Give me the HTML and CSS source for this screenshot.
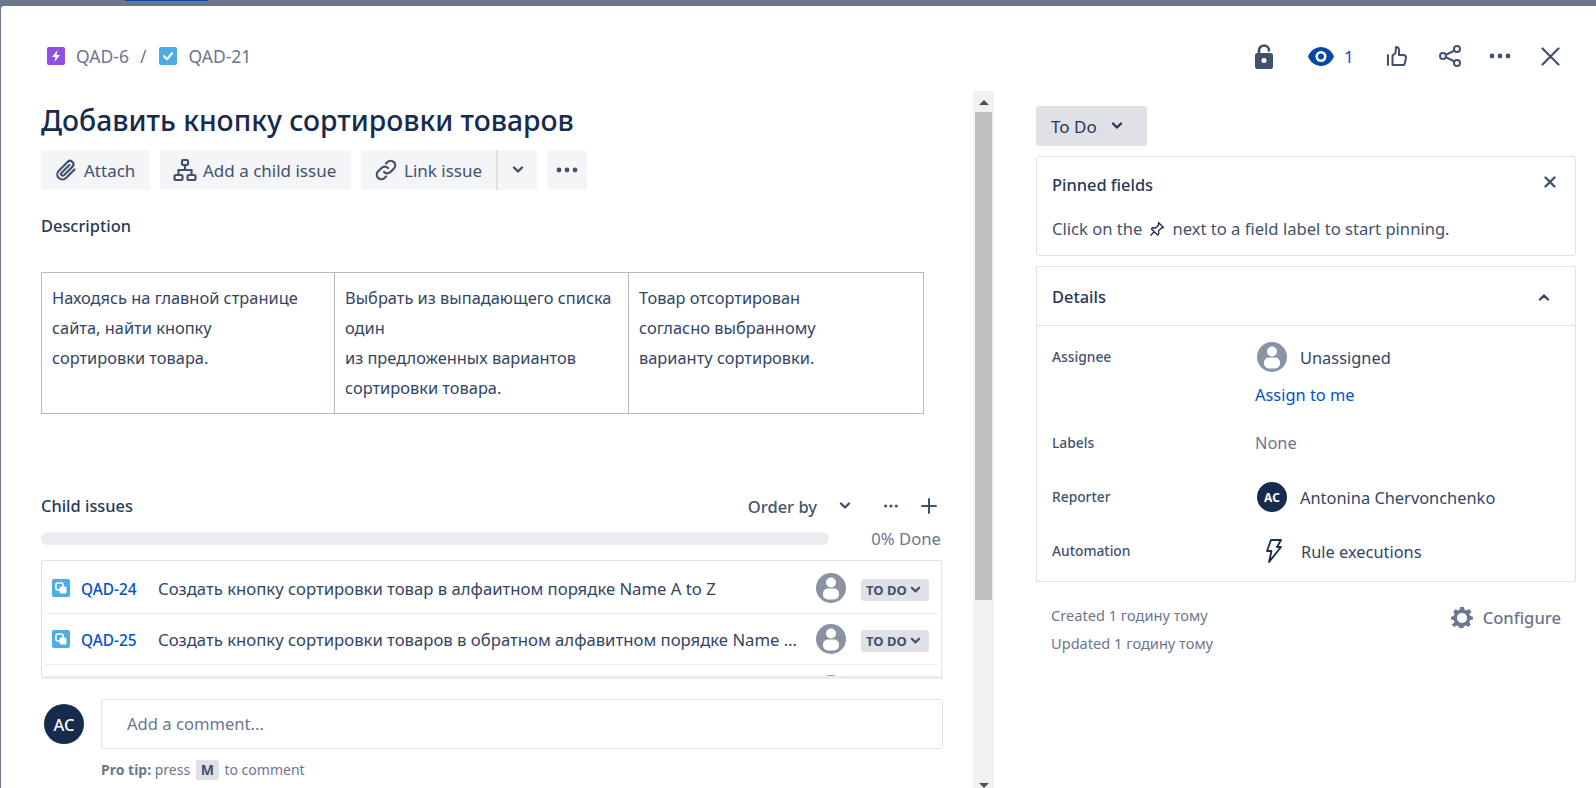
FILE: index.html
```html
<!DOCTYPE html>
<html lang="ru">
<head>
  <meta charset="UTF-8">
  <title>QAD-21</title>
  <link rel="stylesheet" href="styles.css">
</head>
<body>
  <svg class="sprite" aria-hidden="true">
    <symbol id="avatar-empty" viewBox="0 0 30 30">
      <circle cx="15" cy="15" r="15" fill="#8993a4"/>
      <circle cx="15" cy="9.5" r="5" fill="#fff"/>
      <rect x="7" y="15.5" width="16" height="11" rx="5" fill="#fff"/>
    </symbol>
    <symbol id="subtask" viewBox="0 0 18 18">
      <rect width="18" height="18" rx="2" fill="#4bade8"/>
      <rect x="4" y="4" width="7" height="7" rx="1.5" fill="none" stroke="#fff" stroke-width="1.6"/>
      <rect x="7.5" y="7.5" width="7" height="7" rx="1.5" fill="#fff"/>
    </symbol>
    <symbol id="chevron" viewBox="0 0 12 8">
      <path d="M2 1.500l4 4 4-4" fill="none" stroke="currentColor" stroke-width="2.400" stroke-linecap="round" stroke-linejoin="round"/>
    </symbol>
    <symbol id="dots" viewBox="0 0 22 6">
      <circle cx="3" cy="3" r="2.400" fill="currentColor"/>
      <circle cx="11" cy="3" r="2.400" fill="currentColor"/>
      <circle cx="19" cy="3" r="2.400" fill="currentColor"/>
    </symbol>
  </svg>

  <div class="backdrop-tab"></div>
  <div class="modal">
    <header class="top-bar">
      <nav class="breadcrumb">
        <svg class="crumb-icon" viewBox="0 0 18 18"><rect width="18" height="18" rx="2" fill="#904ee2"/><path d="M10.500 3L5 10h3.500l-1 5L13 8H9.500z" fill="#fff"/></svg>
        <span class="crumb-text">QAD-6</span>
        <span class="crumb-sep">/</span>
        <svg class="crumb-icon" viewBox="0 0 18 18"><rect width="18" height="18" rx="2" fill="#4bade8"/><path d="M5 9.200l3 3 5-6" fill="none" stroke="#fff" stroke-width="2.200" stroke-linecap="round" stroke-linejoin="round"/></svg>
        <span class="crumb-text">QAD-21</span>
      </nav>
      <div class="top-actions">
        <svg class="ic-lock" viewBox="0 0 18 25"><path d="M4 11V6.500a5 5 0 0 1 10 0" fill="none" stroke="#42526e" stroke-width="2.600" stroke-linecap="round"/><rect y="9" width="18" height="16" rx="2.500" fill="#42526e"/><circle cx="9" cy="16.500" r="2.500" fill="#fff"/></svg>
        <svg class="ic-eye" viewBox="0 0 26 19"><path d="M0 9.500C2.500 3.500 7.500 0 13 0s10.500 3.500 13 9.500C23.500 15.500 18.500 19 13 19S2.500 15.500 0 9.500z" fill="#0747a6"/><circle cx="13" cy="9.500" r="5.500" fill="#fff"/><circle cx="13" cy="9.500" r="3" fill="#0747a6"/></svg>
        <span class="watch-count">1</span>
        <svg class="ic-thumb" viewBox="0 0 20 20"><path d="M1 9v10M5.500 9.500v9.500h10a2.500 2.500 0 0 0 2.500-2.200l1-5.300a2.500 2.500 0 0 0-2.500-2.500H12V4a3 3 0 0 0-3-3L8.500 7z" fill="none" stroke="#42526e" stroke-width="2" stroke-linejoin="round" stroke-linecap="round"/></svg>
        <svg class="ic-share" viewBox="0 0 22 22"><path d="M17.500 4.500L4.500 11l13 6.500" fill="none" stroke="#42526e" stroke-width="2"/><circle cx="18" cy="4" r="3" fill="#fff" stroke="#42526e" stroke-width="2"/><circle cx="4" cy="11" r="3" fill="#fff" stroke="#42526e" stroke-width="2"/><circle cx="18" cy="18" r="3" fill="#fff" stroke="#42526e" stroke-width="2"/></svg>
        <svg class="ic-dots-top"><use href="#dots"/></svg>
        <svg class="ic-close" viewBox="0 0 19 19"><path d="M1.500 1.500l16 16M17.500 1.500l-16 16" fill="none" stroke="#42526e" stroke-width="2.200" stroke-linecap="round"/></svg>
      </div>
    </header>

    <div class="columns">
      <div class="left-col">
        <main class="issue">
          <div class="issue-scroll">
            <h1 class="issue-title">Добавить кнопку сортировки товаров</h1>
            <div class="toolbar">
              <button class="btn btn-attach">
                <svg class="btn-icon" viewBox="0 0 24 24"><path d="M20.500 11.500l-8.500 8.500a5 5 0 0 1-7.200-7.200l9-9a3.400 3.400 0 0 1 4.800 4.800l-8.600 8.600a1.600 1.600 0 0 1-2.400-2.400l7.800-7.800" fill="none" stroke="#42526e" stroke-width="2.200" stroke-linecap="round" stroke-linejoin="round"/></svg>
                Attach
              </button>
              <button class="btn btn-child">
                <svg class="btn-icon" viewBox="0 0 24 24"><g fill="none" stroke="#42526e" stroke-width="2.200"><rect x="9" y="2" width="6" height="5" rx="1"/><rect x="1.500" y="17" width="8" height="5" rx="1.500"/><rect x="14.500" y="17" width="8" height="5" rx="1.500"/><path d="M12 7v5M5.500 17v-5h13v5"/></g></svg>
                Add a child issue
              </button>
              <div class="btn-group">
                <button class="btn btn-link">
                  <svg class="btn-icon" viewBox="0 0 24 24"><path d="M10 14a4.500 4.500 0 0 0 6.500 0l3.500-3.500a4.600 4.600 0 0 0-6.500-6.500L12 5.500M14 10a4.500 4.500 0 0 0-6.500 0L4 13.500a4.600 4.600 0 0 0 6.500 6.500l1.500-1.500" fill="none" stroke="#42526e" stroke-width="2.200" stroke-linecap="round"/></svg>
                  Link issue
                </button>
                <button class="btn btn-split"><svg class="chev"><use href="#chevron"/></svg></button>
              </div>
              <button class="btn btn-more"><svg class="ic-dots-btn"><use href="#dots"/></svg></button>
            </div>

            <h2 class="section-title desc-title">Description</h2>
            <table class="desc-table">
              <tr>
                <td class="col-a">Находясь на главной странице сайта, найти кнопку<br>сортировки товара.</td>
                <td class="col-b">Выбрать из выпадающего списка один<br>из предложенных вариантов сортировки товара.</td>
                <td class="col-c">Товар отсортирован<br>согласно выбранному<br>варианту сортировки.</td>
              </tr>
            </table>

            <div class="child-head">
              <h2 class="section-title">Child issues</h2>
              <div class="child-actions">
                <span class="order-by">Order by</span>
                <svg class="chev order-chev"><use href="#chevron"/></svg>
                <svg class="ic-dots-small"><use href="#dots"/></svg>
                <svg class="ic-plus" viewBox="0 0 16 16"><path d="M8 1v14M1 8h14" fill="none" stroke="#42526e" stroke-width="2" stroke-linecap="round"/></svg>
              </div>
            </div>
            <div class="progress-row">
              <div class="progress-bar"></div>
              <span class="progress-label">0% Done</span>
            </div>
            <ul class="child-list">
              <li class="child-row">
                <svg class="row-icon"><use href="#subtask"/></svg>
                <a class="row-key">QAD-24</a>
                <span class="row-summary">Создать кнопку сортировки товар в алфаитном порядке Name A to Z</span>
                <svg class="row-avatar"><use href="#avatar-empty"/></svg>
                <span class="lozenge">TO DO<svg class="chev loz-chev"><use href="#chevron"/></svg></span>
              </li>
              <li class="child-row">
                <svg class="row-icon"><use href="#subtask"/></svg>
                <a class="row-key">QAD-25</a>
                <span class="row-summary">Создать кнопку сортировки товаров в обратном алфавитном порядке Name Z to A</span>
                <svg class="row-avatar"><use href="#avatar-empty"/></svg>
                <span class="lozenge">TO DO<svg class="chev loz-chev"><use href="#chevron"/></svg></span>
              </li>
              <li class="child-row child-row-cut">
                <svg class="row-avatar"><use href="#avatar-empty"/></svg>
              </li>
            </ul>
          </div>

          <div class="comment-bar">
            <div class="avatar avatar-big">AC</div>
            <div class="comment-main">
              <div class="comment-input">Add a comment...</div>
              <p class="pro-tip"><b>Pro tip:</b> press <kbd class="key">M</kbd> to comment</p>
            </div>
          </div>
        </main>
        <div class="scrollbar">
          <span class="arrow-up"></span>
          <div class="thumb"></div>
          <span class="arrow-down"></span>
        </div>
      </div>

      <aside class="right-col">
        <button class="status-btn">To Do <svg class="chev status-chev"><use href="#chevron"/></svg></button>

        <section class="panel pinned">
          <div class="pinned-head">
            <h3 class="panel-title">Pinned fields</h3>
            <svg class="ic-close-small" viewBox="0 0 12 12"><path d="M1.500 1.500l9 9M10.500 1.500l-9 9" fill="none" stroke="#42526e" stroke-width="2.400" stroke-linecap="round"/></svg>
          </div>
          <p class="pinned-hint">Click on the
            <svg class="ic-pin" viewBox="0 0 16 16"><path d="M9.500 1.500l5 5-2 .5-3 3 .3 3-1.300 1-6-6 1-1.300 3 .3 3-3zM5 11l-3.500 3.500" fill="none" stroke="#172b4d" stroke-width="1.300" stroke-linejoin="round"/></svg>
            next to a field label to start pinning.</p>
        </section>

        <section class="panel details-head">
          <h3 class="panel-title">Details</h3>
          <svg class="chev details-chev"><use href="#chevron"/></svg>
        </section>
        <section class="details-body">
          <div class="field">
            <span class="field-label">Assignee</span>
            <div>
              <div class="field-person">
                <svg class="person-avatar"><use href="#avatar-empty"/></svg>
                <span>Unassigned</span>
              </div>
              <a class="assign-link">Assign to me</a>
            </div>
          </div>
          <div class="field">
            <span class="field-label">Labels</span>
            <span class="field-none">None</span>
          </div>
          <div class="field">
            <span class="field-label">Reporter</span>
            <div class="field-person">
              <div class="avatar avatar-small">AC</div>
              <span>Antonina Chervonchenko</span>
            </div>
          </div>
          <div class="field">
            <span class="field-label">Automation</span>
            <div class="field-person">
              <svg class="ic-bolt" viewBox="0 0 16 24"><path d="M5 1h10l-4 7h4L3 23l2.500-11H1z" fill="none" stroke="#172b4d" stroke-width="1.800" stroke-linejoin="round"/></svg>
              <span>Rule executions</span>
            </div>
          </div>
        </section>

        <footer class="meta">
          <div class="dates">
            <p>Created 1 годину тому</p>
            <p>Updated 1 годину тому</p>
          </div>
          <div class="configure">
            <svg class="ic-gear" viewBox="0 0 24 24"><path d="M10 1h4l.700 3 2.300 1 2.600-1.600 2.800 2.800L20 8.700l1 2.300 3 .700v3l-3 .700-1 2.300 1.600 2.500-2.800 2.800-2.600-1.600-2.300 1-.700 2.600h-4l-.700-2.600-2.300-1-2.600 1.600-2.800-2.800L4 17.700 3 15.400l-3-.700v-3l3-.700 1-2.300-1.600-2.500 2.800-2.800L7 5l2.300-1z" fill="#6b778c"/><circle cx="12" cy="13" r="5.500" fill="#fff"/></svg>
            <span>Configure</span>
          </div>
        </footer>
      </aside>
    </div>
  </div>
</body>
</html>
```

FILE: styles.css
```css
* {
  box-sizing: border-box;
}

body {
  margin: 0;
  height: 788px;
  overflow: hidden;
  background-color: #6b778c;
  font-family: "Noto Sans", "Open Sans", sans-serif;
  font-size: 16.4px;
  color: #344563;
}

.sprite {
  display: none;
}

h1, h2, h3, p, ul {
  margin: 0;
  padding: 0;
}

svg {
  display: block;
  flex-shrink: 0;
}

.backdrop-tab {
  width: 83px;
  height: 1px;
  margin-left: 125px;
  background-color: #0747a6;
}

.modal {
  margin: 5px 0 0 1px;
  height: 782px;
  background-color: #fff;
  border-radius: 3px 0 0 0;
  overflow: hidden;
}

/* barra de cima */
.top-bar {
  display: flex;
  justify-content: space-between;
  align-items: center;
  height: 86px;
  padding: 28px 36px 14px 46px;
}

.breadcrumb {
  display: flex;
  align-items: center;
  color: #6b778c;
  font-size: 17.5px;
}

.crumb-icon {
  width: 18px;
  height: 18px;
}

.crumb-text {
  margin-left: 11px;
}

.crumb-sep {
  margin: 0 13px 0 11px;
}

.top-actions {
  display: flex;
  align-items: center;
}

.ic-lock {
  width: 18px;
  height: 25px;
}

.ic-eye {
  width: 26px;
  height: 19px;
  margin-left: 35px;
}

.watch-count {
  margin-left: 10px;
  width: 10px;
  color: #0052cc;
  font-size: 17px;
}

.ic-thumb {
  width: 20px;
  height: 20px;
  margin-left: 33px;
}

.ic-share {
  width: 22px;
  height: 22px;
  margin-left: 32px;
}

.ic-dots-top {
  width: 22px;
  height: 6px;
  margin-left: 28px;
  color: #42526e;
}

.ic-close {
  width: 19px;
  height: 19px;
  margin-left: 30px;
}

.columns {
  display: flex;
  height: 696px;
}

/* coluna da esquerda */
.left-col {
  display: flex;
  width: 993px;
  flex-shrink: 0;
}

.issue {
  width: 972px;
  padding-left: 40px;
  padding-right: 30px;
}

.issue-scroll {
  height: 584px;
  overflow: hidden;
}

.issue-title {
  font-size: 28.3px;
  line-height: 36px;
  font-weight: 500;
  margin-top: 10px;
  color: #172b4d;
}

.toolbar {
  display: flex;
  gap: 10px;
  margin-top: 12px;
}

.btn {
  display: flex;
  align-items: center;
  height: 40px;
  border: 0;
  border-radius: 3px;
  background-color: #f4f5f7;
  color: #42526e;
  font: inherit;
  font-size: 17px;
  padding: 0;
}

.btn-icon {
  width: 24px;
  height: 24px;
  margin-right: 6px;
}

.btn-attach {
  width: 109px;
  padding-left: 13px;
}

.btn-child {
  width: 191px;
  padding-left: 13px;
}

.btn-group {
  display: flex;
}

.btn-link {
  width: 137px;
  padding-left: 13px;
  border-right: 2px solid #dfe1e6;
  border-radius: 3px 0 0 3px;
}

.btn-split {
  width: 39px;
  justify-content: center;
  border-radius: 0 3px 3px 0;
}

.btn-more {
  width: 40px;
  justify-content: center;
}

.chev {
  width: 12px;
  height: 8px;
}

.ic-dots-btn {
  width: 22px;
  height: 6px;
}

.section-title {
  font-size: 16.4px;
  line-height: 24px;
  font-weight: 500;
  color: #253858;
}

.desc-title {
  margin-top: 24px;
}

.desc-table {
  border-collapse: collapse;
  table-layout: fixed;
  width: 882px;
  margin-top: 34px;
}

.desc-table td {
  height: 141px;
  border: 1px solid #b3bac5;
  padding: 10px;
  vertical-align: top;
  line-height: 30px;
}

.desc-table .col-a {
  width: 293px;
}

.desc-table .col-b {
  width: 294px;
}

.desc-table .col-c {
  width: 295px;
}

.child-head {
  display: flex;
  justify-content: space-between;
  align-items: center;
  margin-top: 76px;
  height: 32px;
}

.child-actions {
  display: flex;
  align-items: center;
  color: #42526e;
}

.order-by {
  font-size: 16.5px;
  font-weight: 500;
}

.order-chev {
  margin-left: 22px;
}

.ic-dots-small {
  width: 16px;
  height: 4px;
  margin-left: 32px;
}

.ic-plus {
  width: 16px;
  height: 16px;
  margin-left: 22px;
  margin-right: 6px;
}

.progress-row {
  display: flex;
  align-items: center;
  justify-content: space-between;
  height: 24px;
  margin-top: 4px;
  padding-right: 2px;
}

.progress-bar {
  width: 788px;
  height: 13px;
  border-radius: 7px;
  background-color: #ebecf0;
}

.progress-label {
  color: #6b778c;
  font-size: 16.7px;
}

.child-list {
  list-style: none;
  width: 901px;
  margin-top: 10px;
  padding: 2px 3px 0 3px;
  border: 1px solid #dfe1e6;
  border-bottom: 0;
  border-radius: 3px 3px 0 0;
}

.child-row {
  display: flex;
  align-items: center;
  height: 51px;
  padding: 0 9px 0 7px;
  border-bottom: 1px solid #ebecf0;
}

.child-row-cut {
  justify-content: flex-end;
  padding-right: 92px;
}

.row-icon {
  width: 18px;
  height: 18px;
}

.row-key {
  width: 77px;
  margin-left: 11px;
  margin-top: 2px;
  color: #0052cc;
  font-size: 15.4px;
  font-weight: 500;
}

.row-summary {
  width: 645px;
  white-space: nowrap;
  overflow: hidden;
  text-overflow: ellipsis;
  font-size: 16.7px;
}

.row-avatar {
  width: 30px;
  height: 30px;
  margin-left: 13px;
}

.lozenge {
  display: flex;
  align-items: center;
  width: 68px;
  height: 22px;
  margin-left: 15px;
  margin-top: 3px;
  padding: 0 5px;
  gap: 3px;
  border-radius: 3px;
  background-color: #dfe1e6;
  color: #42526e;
  font-size: 13px;
  font-weight: 700;
}

.loz-chev {
  width: 11px;
  height: 8px;
}

/* caixa de comentario */
.comment-bar {
  display: flex;
  border-top: 3px solid #ebecf0;
  padding: 20px 0 0 3px;
  width: 902px;
}

.avatar {
  display: flex;
  align-items: center;
  justify-content: center;
  flex-shrink: 0;
  border-radius: 50%;
  background-color: #172b4d;
  color: #fff;
}

.avatar-big {
  width: 40px;
  height: 40px;
  margin-top: 5px;
  font-size: 16.5px;
  font-weight: 500;
}

.avatar-small {
  width: 30px;
  height: 30px;
  font-size: 12px;
  font-weight: 700;
}

.comment-main {
  margin-left: 17px;
  flex-grow: 1;
}

.comment-input {
  height: 50px;
  line-height: 48px;
  padding-left: 25px;
  border: 1px solid #dfe1e6;
  border-radius: 3px;
  color: #6b778c;
  font-size: 16.6px;
}

.pro-tip {
  margin-top: 10px;
  color: #6b778c;
  font-size: 14px;
  line-height: 22px;
}

.key {
  display: inline-block;
  width: 23px;
  height: 20px;
  line-height: 20px;
  text-align: center;
  border-radius: 3px;
  background-color: #dfe1e6;
  color: #42526e;
  font-family: inherit;
  font-weight: 700;
  margin: 0 2px;
}

/* barra de rolagem */
.scrollbar {
  position: relative;
  width: 21px;
  margin-top: -1px;
  background-color: #f1f1f1;
  padding: 21px 2px 0;
}

.thumb {
  height: 488px;
  background-color: #c1c1c1;
}

.arrow-up, .arrow-down {
  position: absolute;
  left: 5.5px;
  border-left: 5px solid transparent;
  border-right: 5px solid transparent;
}

.arrow-up {
  top: 9px;
  border-bottom: 5px solid #505050;
}

.arrow-down {
  bottom: 0;
  border-top: 5px solid #505050;
}

/* coluna da direita */
.right-col {
  width: 540px;
  margin-left: 42px;
  padding-top: 14px;
}

.status-btn {
  display: flex;
  align-items: center;
  width: 111px;
  height: 40px;
  padding-left: 15px;
  border: 0;
  border-radius: 3px;
  background-color: #dfe1e6;
  color: #253858;
  font: inherit;
  font-size: 17px;
}

.status-chev {
  margin-left: 14px;
}

.panel {
  border: 1px solid #dfe1e6;
  border-radius: 3px;
}

.panel-title {
  font-size: 16.4px;
  font-weight: 500;
  color: #253858;
}

.pinned {
  height: 100px;
  margin-top: 10px;
  padding: 15px 15px 0;
}

.pinned-head {
  display: flex;
  justify-content: space-between;
  align-items: center;
  height: 24px;
}

.ic-close-small {
  width: 12px;
  height: 12px;
  margin-right: 4px;
  margin-top: -4px;
}

.pinned-hint {
  display: flex;
  align-items: center;
  gap: 7px;
  margin-top: 21px;
  line-height: 24px;
  font-size: 16.6px;
  color: #42526e;
}

.ic-pin {
  width: 16px;
  height: 16px;
}

.details-head {
  display: flex;
  justify-content: space-between;
  align-items: center;
  height: 60px;
  margin-top: 10px;
  padding: 1px 25px 0 15px;
}

.details-chev {
  transform: rotate(180deg);
}

.details-body {
  display: flex;
  flex-direction: column;
  gap: 24px;
  height: 257px;
  margin-top: -1px;
  padding: 17px 15px 0;
  border: 1px solid #dfe1e6;
  border-top: 0;
  border-radius: 0 0 3px 3px;
}

.field {
  display: grid;
  grid-template-columns: 203px 1fr;
}

.field-label {
  font-size: 13.8px;
  font-weight: 500;
  line-height: 29px;
  color: #42526e;
}

.field-person {
  display: flex;
  align-items: center;
  height: 30px;
  padding-left: 2px;
}

.person-avatar {
  width: 30px;
  height: 30px;
  margin-right: 13px;
}

.avatar-small {
  margin-right: 13px;
}

.assign-link {
  display: block;
  margin-top: 14px;
  line-height: 18px;
  color: #0052cc;
}

.field-none {
  line-height: 30px;
  color: #6b778c;
}

.ic-bolt {
  width: 16px;
  height: 24px;
  margin: 0 19px 0 9px;
}

.meta {
  display: flex;
  justify-content: space-between;
  padding: 19px 15px 0;
}

.dates p {
  color: #6b778c;
  font-size: 14.6px;
  line-height: 28px;
}

.configure {
  display: flex;
  align-items: center;
  height: 28px;
  margin-top: 2px;
  color: #6b778c;
  font-size: 16.6px;
  font-weight: 500;
}

.ic-gear {
  width: 22px;
  height: 22px;
  margin-right: 10px;
}
```
